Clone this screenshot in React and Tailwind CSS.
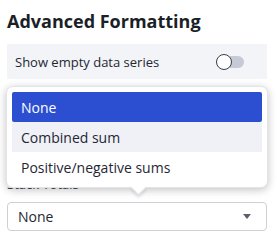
import React from "react";

export default function App() {
  const font = { fontFamily: '"Open Sans", "Noto Sans", sans-serif' };
  return (
    <div
      className="relative w-[277px] h-[241px] bg-white px-[7px] pt-[9px] text-[#1f2733] overflow-hidden"
      style={font}
    >
      <div className="text-[18px] leading-[24px] font-bold text-[#1b1f27]">
        Advanced Formatting
      </div>
      <div className="mt-[11px] h-[35px] w-[260px] bg-[#f3f4f7] flex items-center justify-between pl-[8px] pr-[23px]">
        <span className="text-[13px] leading-[18px]">Show empty data series</span>
        <div className="relative w-[28px] h-[12px] rounded-full bg-[#c6c9d6]">
          <div className="absolute left-0 top-[-2px] w-[16px] h-[16px] rounded-full bg-white border border-[#3a3f47]" />
        </div>
      </div>
      <div className="mt-[96px] text-[13px] leading-[18px] text-[#3a4250]">Stack Totals</div>
      <div className="mt-[9px] h-[29px] w-[260px] border border-[#cdd0d6] rounded-[4px] flex items-center justify-between pl-[10px] pr-[15px]">
        <span className="text-[14px] leading-[18px]">None</span>
        <svg width="8" height="5" viewBox="0 0 8 5">
          <path d="M0 0 L8 0 L4 5 Z" fill="#5b6069" />
        </svg>
      </div>

      <div className="absolute left-[6px] top-[86px] w-[262px] h-[102px] bg-white rounded-[7px] border border-[#e2e4e8] shadow-[0_2px_8px_rgba(0,0,0,0.24)] p-[5px]">
        <div className="flex flex-col text-[14px]">
          <div className="h-[30px] flex items-center px-[9px] bg-[#2b4fd0] text-white rounded-[2px]">None</div>
          <div className="h-[30px] flex items-center px-[9px] bg-[#eff1f6]">Combined sum</div>
          <div className="h-[30px] flex items-center px-[9px]">Positive/negative sums</div>
        </div>
        <div className="absolute left-[126px] bottom-[-6px] w-[11px] h-[11px] bg-white rotate-45 border-r border-b border-[#e2e4e8] shadow-[2px_2px_3px_rgba(0,0,0,0.12)]" />
      </div>
    </div>
  );
}
